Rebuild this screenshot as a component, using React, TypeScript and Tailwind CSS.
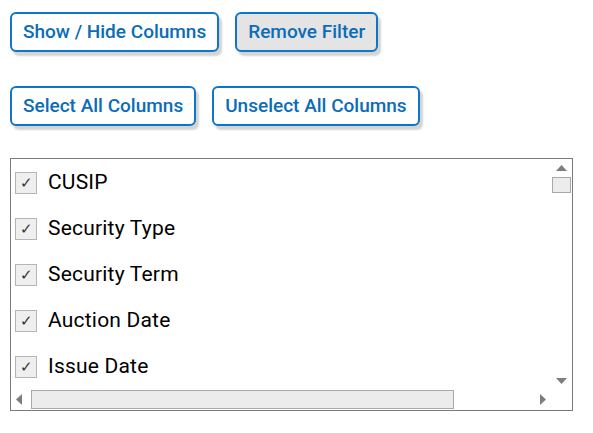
const columns = ['CUSIP', 'Security Type', 'Security Term', 'Auction Date', 'Issue Date']

function ActionButton({ label, active }: { label: string; active?: boolean }) {
  return (
    <button
      className={`h-10 px-[11px] border-2 border-[#0d76c8] rounded-[6px] text-[#0b6cb8] text-[19px] font-medium shadow-[3px_4px_2px_#d4d4d4] ${active ? 'bg-[#e4e4e4]' : 'bg-white'}`}
    >
      {label}
    </button>
  )
}

export default function App() {
  return (
    <div className="w-[593px] h-[433px] bg-white pl-[10px] pt-[12px] font-['Roboto',sans-serif]">
      <div className="flex gap-4">
        <ActionButton label="Show / Hide Columns" />
        <ActionButton label="Remove Filter" active />
      </div>
      <div className="flex gap-4 mt-[34px]">
        <ActionButton label="Select All Columns" />
        <ActionButton label="Unselect All Columns" />
      </div>

      {/* column list */}
      <div className="mt-[32px] w-[563px] h-[253px] border border-[#7a7a7a] grid grid-cols-[1fr_22px] grid-rows-[1fr_22px] overflow-hidden">
        <div className="overflow-hidden pt-px">
          {columns.map((c) => (
            <div key={c} className="h-[46px] flex items-center pl-[4px] gap-[11px]">
              <span className="w-[22px] h-[22px] border border-[#b5b5b5] bg-[#efefef] flex items-center justify-center text-[#333] text-[15px] leading-none">
                ✓
              </span>
              <span className="text-[21px] tracking-[0.2px] text-black whitespace-nowrap">{c}</span>
            </div>
          ))}
        </div>
        <div className="flex flex-col items-center pt-[6px] pb-[4px]">
          <svg width="11" height="6" viewBox="0 0 11 6"><path d="M0 6 L5.5 0 L11 6 Z" fill="#7d7d7d" /></svg>
          <div className="w-[19px] h-[16px] mt-[6px] bg-[#ececec] border border-[#a9a9a9]" />
          <div className="flex-1" />
          <svg width="11" height="6" viewBox="0 0 11 6"><path d="M0 0 L5.5 6 L11 0 Z" fill="#7d7d7d" /></svg>
        </div>
        <div className="flex items-center pl-[5px] pr-[4px]">
          <svg width="6" height="11" viewBox="0 0 6 11"><path d="M6 0 L0 5.5 L6 11 Z" fill="#7d7d7d" /></svg>
          <div className="w-[423px] h-[19px] ml-[9px] bg-[#ececec] border border-[#a9a9a9]" />
          <div className="flex-1" />
          <svg width="6" height="11" viewBox="0 0 6 11"><path d="M0 0 L6 5.5 L0 11 Z" fill="#7d7d7d" /></svg>
        </div>
        <div />
      </div>
    </div>
  )
}
